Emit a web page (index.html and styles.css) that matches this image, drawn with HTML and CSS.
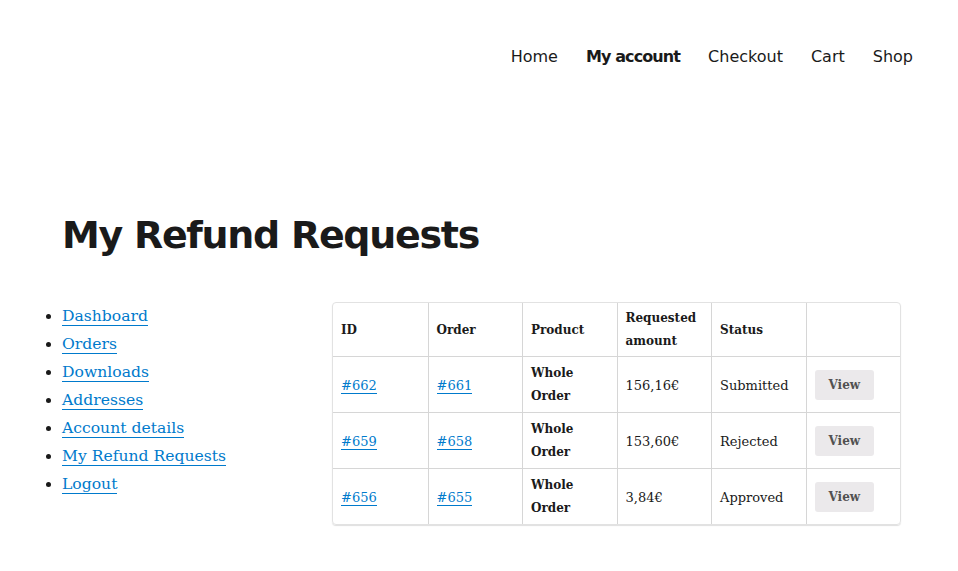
FILE: index.html
```html
<!DOCTYPE html>
<html lang="en">
<head>
<meta charset="utf-8">
<title>My Refund Requests</title>
<link rel="stylesheet" href="styles.css">
</head>
<body>
<header class="site-header">
  <nav class="main-nav">
    <a href="#" class="nav-item">Home</a>
    <a href="#" class="nav-item current">My account</a>
    <a href="#" class="nav-item">Checkout</a>
    <a href="#" class="nav-item">Cart</a>
    <a href="#" class="nav-item">Shop</a>
  </nav>
</header>
<main class="content">
  <h1 class="page-title">My Refund Requests</h1>
  <div class="account">
    <nav class="account-nav">
      <ul>
        <li><a href="#">Dashboard</a></li>
        <li><a href="#">Orders</a></li>
        <li><a href="#">Downloads</a></li>
        <li><a href="#">Addresses</a></li>
        <li><a href="#">Account details</a></li>
        <li><a href="#">My Refund Requests</a></li>
        <li><a href="#">Logout</a></li>
      </ul>
    </nav>
    <div class="account-content">
      <table class="refunds">
        <thead>
          <tr>
            <th>ID</th>
            <th>Order</th>
            <th>Product</th>
            <th>Requested amount</th>
            <th>Status</th>
            <th></th>
          </tr>
        </thead>
        <tbody>
          <tr>
            <td><a href="#">#662</a></td>
            <td><a href="#">#661</a></td>
            <td class="product">Whole Order</td>
            <td>156,16€</td>
            <td>Submitted</td>
            <td><a href="#" class="button">View</a></td>
          </tr>
          <tr>
            <td><a href="#">#659</a></td>
            <td><a href="#">#658</a></td>
            <td class="product">Whole Order</td>
            <td>153,60€</td>
            <td>Rejected</td>
            <td><a href="#" class="button">View</a></td>
          </tr>
          <tr>
            <td><a href="#">#656</a></td>
            <td><a href="#">#655</a></td>
            <td class="product">Whole Order</td>
            <td>3,84€</td>
            <td>Approved</td>
            <td><a href="#" class="button">View</a></td>
          </tr>
        </tbody>
      </table>
    </div>
  </div>
</main>
</body>
</html>
```

FILE: styles.css
```css
html, body {
  margin: 0;
  padding: 0;
  background: #ffffff;
}

body {
  color: #1a1a1a;
  font-family: "DejaVu Serif", "Liberation Serif", serif;
  font-size: 16px;
}

a {
  color: #007acc;
  text-decoration: none;
}

.site-header {
  padding: 45px 45px 0 0;
}

.main-nav {
  display: flex;
  justify-content: flex-end;
  gap: 28px;
  font-family: "DejaVu Sans", "Liberation Sans", sans-serif;
  font-size: 16px;
  line-height: 24px;
}

.nav-item {
  color: #1a1a1a;
}

.nav-item.current {
  font-weight: 700;
  letter-spacing: -0.9px;
}

.content {
  padding: 0 57px 40px 62px;
}

.page-title {
  margin: 143px 0 44px;
  font-family: "DejaVu Sans", "Liberation Sans", sans-serif;
  font-size: 38px;
  line-height: 46px;
  font-weight: 700;
  letter-spacing: -1.3px;
  color: #1a1a1a;
}

.account {
  display: flex;
  align-items: flex-start;
}

.account-nav {
  width: 270px;
  flex: none;
}

.account-nav ul {
  margin: 0;
  padding: 0;
  list-style: disc outside;
  font-size: 15.6px;
}

.account-nav li {
  line-height: 28px;
}

.account-nav a {
  box-shadow: 0 1px 0 0 currentColor;
}

.account-content {
  flex: 1;
}

.refunds {
  width: 100%;
  table-layout: fixed;
  border-collapse: separate;
  border-spacing: 0;
  border: 1px solid #e2e2e2;
  border-radius: 4px;
  box-shadow: 0 1px 1px rgba(0, 0, 0, 0.13);
  font-size: 13px;
  line-height: 23px;
}

.refunds th,
.refunds td {
  text-align: left;
  vertical-align: middle;
  border-left: 1px solid #d6d6d6;
}

.refunds th:first-child,
.refunds td:first-child {
  border-left: 0;
}

.refunds th {
  padding: 4px 8px 3px;
  font-size: 12px;
  font-weight: 700;
}

.refunds td {
  padding: 5px 8px 4px;
  border-top: 1px solid #d6d6d6;
}

.refunds td a {
  box-shadow: 0 1px 0 0 currentColor;
}

.refunds td.product {
  font-size: 12px;
  font-weight: 700;
}

.refunds td a.button {
  display: inline-block;
  box-shadow: none;
  background: #ebe9eb;
  color: #515151;
  font-size: 12px;
  font-weight: 700;
  line-height: 30px;
  padding: 0 14px;
  border-radius: 3px;
}
```
